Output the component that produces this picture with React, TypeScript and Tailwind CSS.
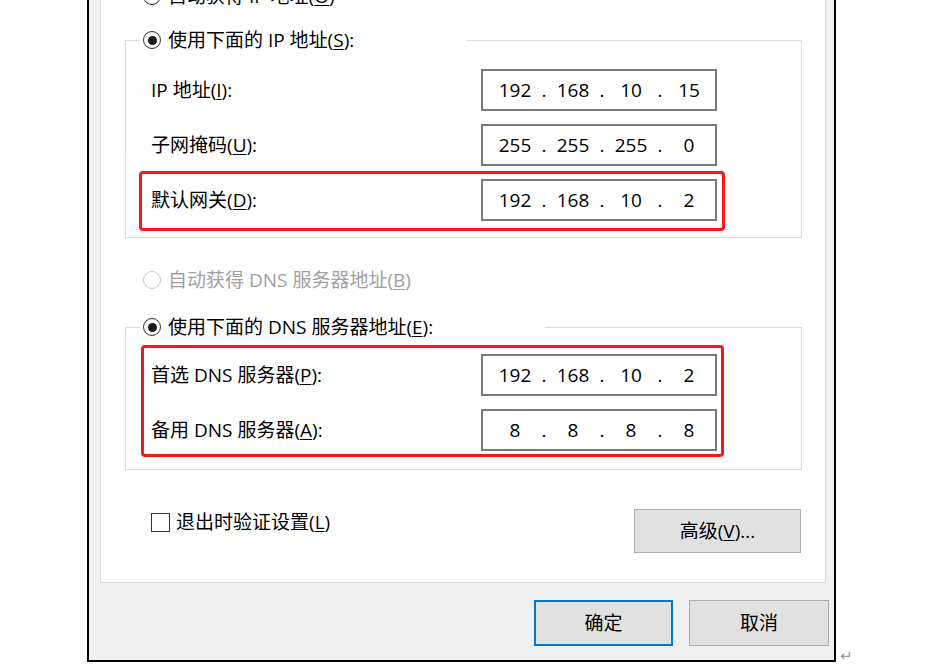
import React from "react";

type Parts = [string, string, string, string];

const Radio = ({ checked, disabled }: { checked?: boolean; disabled?: boolean }) => (
  <span
    className={`flex h-[18px] w-[18px] shrink-0 items-center justify-center rounded-full border-[1.5px] bg-white ${
      disabled ? "border-[#c8c8c8]" : "border-[#333333]"
    }`}
  >
    {checked ? <span className="h-[9px] w-[9px] rounded-full bg-[#1a1a1a]" /> : null}
  </span>
);

const IpBox = ({ parts }: { parts: Parts }) => (
  <div className="flex h-[42px] w-[236px] shrink-0 items-center border-2 border-[#7a7a7a] bg-white pl-[12px] text-[19px] leading-none">
    {parts.map((p, i) => (
      <React.Fragment key={i}>
        <span className="w-[40px] text-center">{p}</span>
        {i < 3 ? <span className="w-[18px] text-center">.</span> : null}
      </React.Fragment>
    ))}
  </div>
);

const Label = ({ text, keyChar, tail = ":" }: { text: string; keyChar: string; tail?: string }) => (
  <span className="whitespace-pre text-[19px] leading-none">
    {text}(<span className="underline underline-offset-2">{keyChar}</span>){tail}
  </span>
);

export default function App() {
  return (
    <div className="flex h-[667px] w-[951px] items-end overflow-hidden bg-white font-['Open_Sans','Noto_Sans_CJK_SC',sans-serif] text-black">
      {/* dialog, cut off at the top */}
      <div className="ml-[87px] mb-[5px] flex h-[662px] w-[749px] shrink-0 flex-col overflow-hidden border-x-2 border-b-2 border-black bg-[#f0f0f0]">
        <div className="ml-[11px] mr-[8px] flex h-[583px] shrink-0 flex-col border-x border-b border-[#dadada] bg-white">
          <div className="-mt-[16px] flex h-[24px] items-center gap-[7px] pl-[42px]">
            <Radio />
            <Label text="自动获得 IP 地址" keyChar="O" tail="" />
          </div>

          <fieldset className="mt-[20px] ml-[24px] w-[677px] border border-[#dcdcdc] pb-[6px]">
            <legend className="ml-[14px] w-[327px] p-0">
              <div className="flex h-[24px] items-center gap-[7px] bg-white pl-[3px]">
                <Radio checked />
                <Label text="使用下面的 IP 地址" keyChar="S" />
              </div>
            </legend>
            <div className="mt-[14px] ml-[13px] flex w-[586px] items-center justify-between border-[3px] border-transparent pl-[9px] pr-[5px]">
              <Label text="IP 地址" keyChar="I" />
              <IpBox parts={["192", "168", "10", "15"]} />
            </div>
            <div className="mt-[7px] ml-[13px] flex w-[586px] items-center justify-between border-[3px] border-transparent pl-[9px] pr-[5px]">
              <Label text="子网掩码" keyChar="U" />
              <IpBox parts={["255", "255", "255", "0"]} />
            </div>
            <div className="mt-[2px] ml-[13px] flex w-[586px] items-center justify-between rounded-[4px] border-[3px] border-[#f41a1a] pt-[5px] pb-[7px] pl-[9px] pr-[5px]">
              <Label text="默认网关" keyChar="D" />
              <IpBox parts={["192", "168", "10", "2"]} />
            </div>
          </fieldset>

          <div className="mt-[30px] flex h-[24px] items-center gap-[7px] pl-[42px] text-[#a0a0a0]">
            <Radio disabled />
            <Label text="自动获得 DNS 服务器地址" keyChar="B" tail="" />
          </div>

          <fieldset className="mt-[23px] ml-[24px] w-[677px] border border-[#dcdcdc] pb-[12px]">
            <legend className="ml-[14px] w-[405px] p-0">
              <div className="flex h-[24px] items-center gap-[7px] bg-white pl-[3px]">
                <Radio checked />
                <Label text="使用下面的 DNS 服务器地址" keyChar="E" />
              </div>
            </legend>
            <div className="mt-[6px] ml-[15px] flex w-[583px] flex-col gap-[13px] rounded-[4px] border-[3px] border-[#f41a1a] pt-[6px] pb-[3px] pl-[7px] pr-[4px]">
              <div className="flex items-center justify-between">
                <Label text="首选 DNS 服务器" keyChar="P" />
                <IpBox parts={["192", "168", "10", "2"]} />
              </div>
              <div className="flex items-center justify-between">
                <Label text="备用 DNS 服务器" keyChar="A" />
                <IpBox parts={["8", "8", "8", "8"]} />
              </div>
            </div>
          </fieldset>

          <div className="mt-[39px] flex items-start justify-between pl-[50px] pr-[24px]">
            <div className="mt-[4px] flex items-center gap-[6px]">
              <span className="h-[19px] w-[19px] shrink-0 border-[1.5px] border-[#333333] bg-white" />
              <Label text="退出时验证设置" keyChar="L" tail="" />
            </div>
            <button className="flex h-[44px] w-[167px] items-center justify-center border border-[#adadad] bg-[#e1e1e1] text-[19px] leading-none">
              高级(<span className="underline underline-offset-2">V</span>)...
            </button>
          </div>
        </div>

        <div className="mt-[17px] flex justify-end gap-[16px] pr-[5px]">
          <button className="flex h-[46px] w-[139px] items-center justify-center border-2 border-[#0078d7] bg-[#e1e1e1] text-[19px] leading-none">
            确定
          </button>
          <button className="flex h-[46px] w-[140px] items-center justify-center border border-[#adadad] bg-[#e1e1e1] text-[19px] leading-none">
            取消
          </button>
        </div>
      </div>

      <span className="mb-[3px] ml-[4px] font-['DejaVu_Sans',sans-serif] text-[15px] leading-none text-[#9a9a9a]">↵</span>
    </div>
  );
}
